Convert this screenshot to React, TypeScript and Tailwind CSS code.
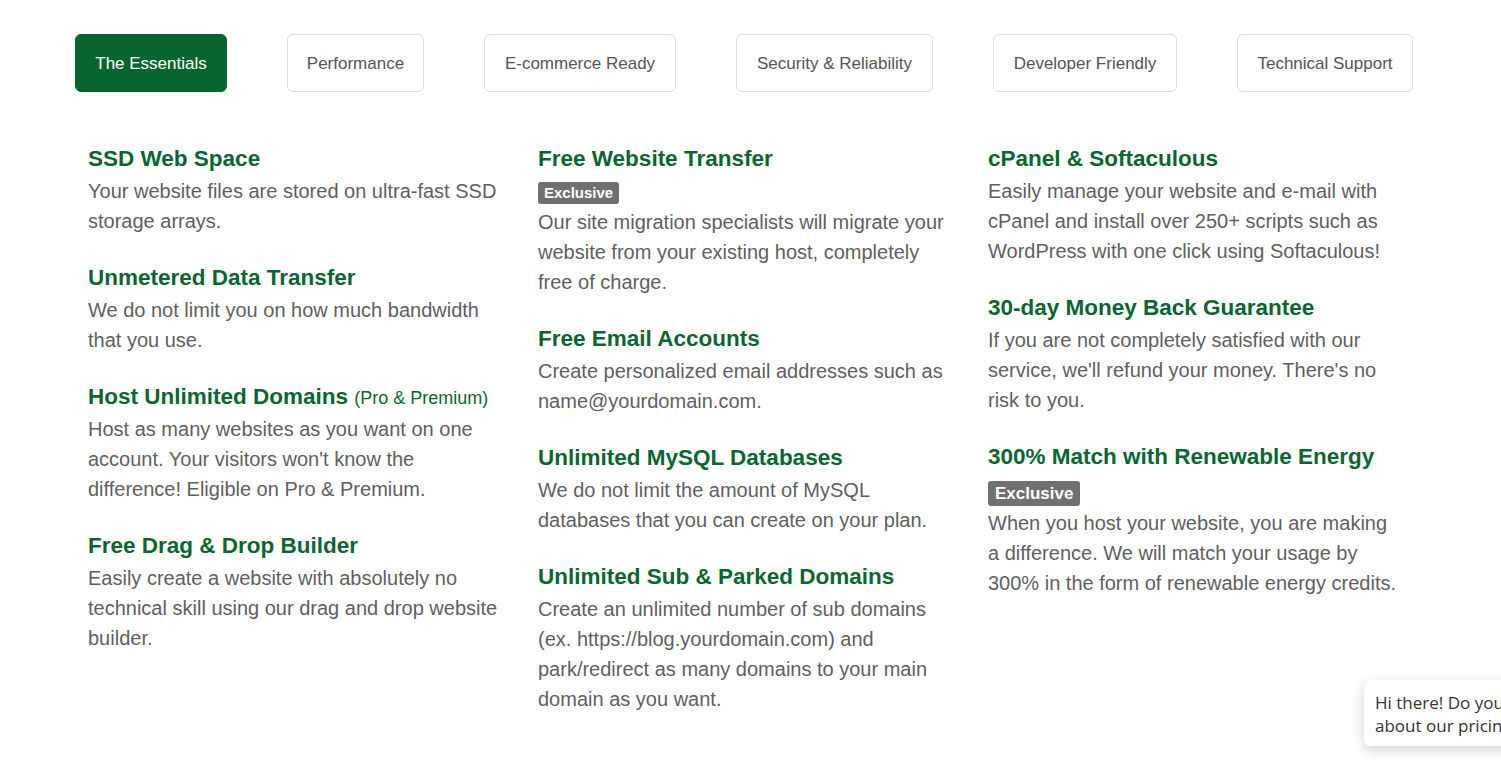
import React from "react";

type Item = {
  title: string;
  extra?: string;
  badge?: "sm" | "lg";
  body: string;
};

const columns: Item[][] = [
  [
    { title: "SSD Web Space", body: "Your website files are stored on ultra-fast SSD storage arrays." },
    { title: "Unmetered Data Transfer", body: "We do not limit you on how much bandwidth that you use." },
    {
      title: "Host Unlimited Domains",
      extra: "(Pro & Premium)",
      body: "Host as many websites as you want on one account. Your visitors won't know the difference! Eligible on Pro & Premium.",
    },
    {
      title: "Free Drag & Drop Builder",
      body: "Easily create a website with absolutely no technical skill using our drag and drop website builder.",
    },
  ],
  [
    {
      title: "Free Website Transfer",
      badge: "sm",
      body: "Our site migration specialists will migrate your website from your existing host, completely free of charge.",
    },
    { title: "Free Email Accounts", body: "Create personalized email addresses such as name@yourdomain.com." },
    { title: "Unlimited MySQL Databases", body: "We do not limit the amount of MySQL databases that you can create on your plan." },
    {
      title: "Unlimited Sub & Parked Domains",
      body: "Create an unlimited number of sub domains (ex. https://blog.yourdomain.com) and park/redirect as many domains to your main domain as you want.",
    },
  ],
  [
    {
      title: "cPanel & Softaculous",
      body: "Easily manage your website and e-mail with cPanel and install over 250+ scripts such as WordPress with one click using Softaculous!",
    },
    {
      title: "30-day Money Back Guarantee",
      body: "If you are not completely satisfied with our service, we'll refund your money. There's no risk to you.",
    },
    {
      title: "300% Match with Renewable Energy",
      badge: "lg",
      body: "When you host your website, you are making a difference. We will match your usage by 300% in the form of renewable energy credits.",
    },
  ],
];

const tabs = [
  { label: "The Essentials", w: "w-[152px]", active: true },
  { label: "Performance", w: "w-[137px]" },
  { label: "E-commerce Ready", w: "w-[192px]" },
  { label: "Security & Reliability", w: "w-[197px]" },
  { label: "Developer Friendly", w: "w-[184px]" },
  { label: "Technical Support", w: "w-[176px]" },
];

function Feature({ item }: { item: Item }) {
  return (
    <div className="mb-[25px]">
      <h3 className="text-[22.5px] leading-[34px] h-[34px] font-bold text-[#0a6631] whitespace-nowrap">
        {item.title}
        {item.extra && (
          <>
            {" "}
            <span className="text-[18px] leading-[34px] font-normal text-[#0a6631]">{item.extra}</span>
          </>
        )}
      </h3>
      {item.badge === "sm" && (
        <div className="mt-[6px] mb-[3px] flex">
          <span className="h-[22px] px-[6px] rounded-[3px] bg-[#707070] text-white text-[15px] font-bold leading-[22px]">
            Exclusive
          </span>
        </div>
      )}
      {item.badge === "lg" && (
        <div className="mt-[7px] mb-[2px] flex">
          <span className="h-[25px] px-[7px] rounded-[3px] bg-[#707070] text-white text-[17px] font-bold leading-[25px]">
            Exclusive
          </span>
        </div>
      )}
      <p className="text-[20px] leading-[30px] text-[#5f5f5f]">{item.body}</p>
    </div>
  );
}

export default function App() {
  return (
    <div
      className="relative min-h-[771px] bg-white overflow-hidden"
      style={{ fontFamily: '"Liberation Sans", Arial, sans-serif' }}
    >
      <div className="w-[1350px] ml-[75px] pt-[34px]">
        <div className="flex gap-[60px]">
          {tabs.map((t) => (
            <div
              key={t.label}
              className={
                t.active
                  ? `${t.w} h-[58px] pt-[2px] rounded-[6px] bg-[#08652f] text-white text-[17px] flex items-center justify-center border border-[#08652f]`
                  : `${t.w} h-[58px] pt-[2px] rounded-[6px] bg-white text-[#555555] text-[17px] flex items-center justify-center border border-[#dddddd]`
              }
            >
              {t.label}
            </div>
          ))}
        </div>
        <div className="grid grid-cols-3 mt-[50px]">
          {columns.map((col, i) => (
            <div key={i} className="pl-[13px]">
              <div className="w-[412px]">
                {col.map((item) => (
                  <Feature key={item.title} item={item} />
                ))}
              </div>
            </div>
          ))}
        </div>
      </div>
      <div
        className="absolute left-[1364px] top-[680px] w-[240px] h-[66px] bg-white rounded-[6px] shadow-[0_4px_14px_rgba(0,0,0,0.18)] px-[11px] pt-[11px] text-[17px] leading-[23px] text-[#333333] whitespace-nowrap"
        style={{ fontFamily: '"Open Sans", sans-serif' }}
      >
        <div>Hi there! Do you have any questions</div>
        <div>about our pricing?</div>
      </div>
    </div>
  );
}
